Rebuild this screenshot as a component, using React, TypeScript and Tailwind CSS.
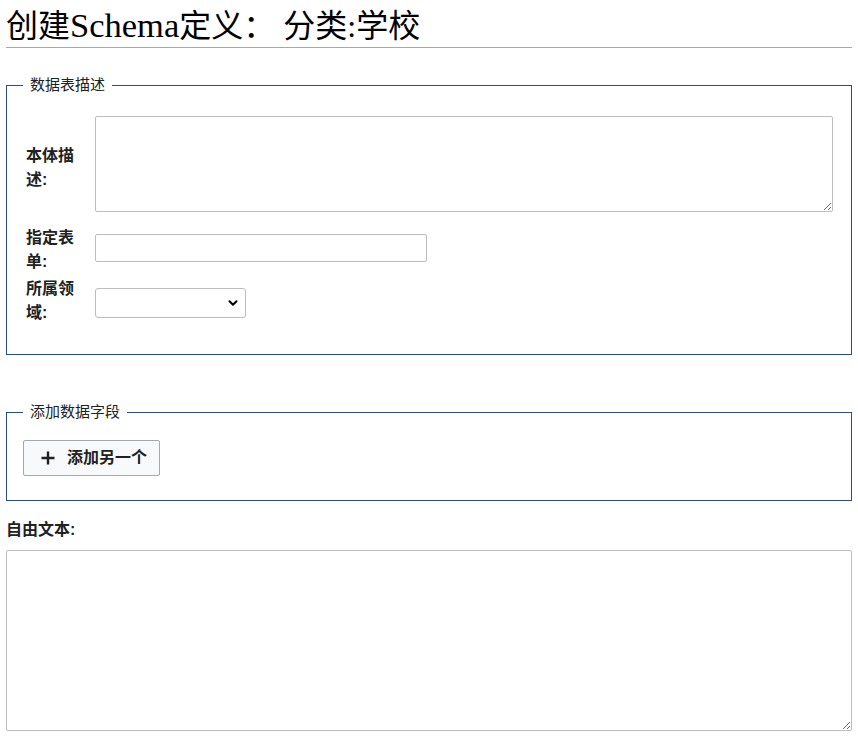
import { ChevronDown } from "lucide-react";

const sans = "font-['Liberation_Sans','Noto_Sans_CJK_SC',sans-serif]";

export default function App() {
  return (
    <div className={`min-h-screen bg-white px-[6px] text-[#202122] ${sans}`}>
      <h1 className="border-b border-[#a2a9b1] pt-[5px] pb-[1px] font-['Liberation_Serif','Noto_Sans_CJK_SC',serif] text-[32px] leading-[40px] font-normal text-black">
        创建<span className="text-[34.5px]">Schema</span>定义： 分类:学校
      </h1>

      {/* table description */}
      <fieldset className="mt-[27px] border border-[#2a4b8d] pl-4 pr-[18px] pb-[29px]">
        <legend className="px-[7px] text-[15px] leading-[20px] text-[#202122]">数据表描述</legend>

        <div className="mt-[21px] flex h-[103px] items-center">
          <label className="w-[72px] shrink-0 pl-[3px] text-[16px] leading-[24px] font-bold">
            本体描<br />述:
          </label>
          <textarea className="h-[96px] flex-1 self-start rounded-[2px] border border-[#bdbdbd] bg-white" />
        </div>

        <div className="mt-[7px] flex h-[48px] items-center">
          <label className="w-[72px] shrink-0 pl-[3px] text-[16px] leading-[24px] font-bold">
            指定表<br />单:
          </label>
          <input className="mb-[4px] h-[28px] w-[332px] rounded-[2px] border border-[#bdbdbd] bg-white" />
        </div>

        <div className="mt-[3px] flex h-[48px] items-center">
          <label className="w-[72px] shrink-0 pl-[3px] text-[16px] leading-[24px] font-bold">
            所属领<br />域:
          </label>
          <div className="relative mt-[3px]">
            <select className="h-[30px] w-[151px] appearance-none rounded-[3px] border border-[#bdbdbd] bg-white">
              <option></option>
            </select>
            <ChevronDown className="pointer-events-none absolute right-[6px] top-[8px] h-[14px] w-[14px] text-black" strokeWidth={3.5} />
          </div>
        </div>
      </fieldset>

      {/* add fields */}
      <fieldset className="mt-[47px] border border-[#2a4b8d] pl-4 pr-4 pb-[24px]">
        <legend className="px-[7px] text-[15px] leading-[20px] text-[#202122]">添加数据字段</legend>
        <button className="mt-[18px] flex h-[36px] w-[137px] items-center gap-[12px] rounded-[2px] border border-[#a2a9b1] bg-[#f8f9fa] pl-[17px] text-[16px] font-bold text-[#202122]">
          <svg width="14" height="14" viewBox="0 0 14 14" className="shrink-0">
            <path d="M7 0.5v13M0.5 7h13" stroke="#202122" strokeWidth="2.4" />
          </svg>
          添加另一个
        </button>
      </fieldset>

      <div className="mt-[17px] text-[16px] leading-[24px] font-bold">自由文本:</div>
      <textarea className="mt-[8px] block h-[181px] w-full rounded-[2px] border border-[#bdbdbd] bg-white" />
    </div>
  );
}
